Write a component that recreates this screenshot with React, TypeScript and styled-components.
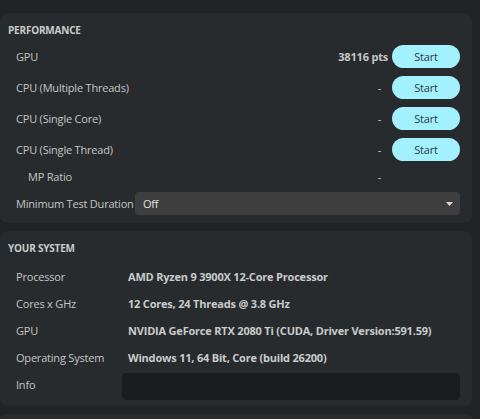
import React from 'react';
import styled, { createGlobalStyle } from 'styled-components';

const GlobalStyle = createGlobalStyle`
  html, body {
    margin: 0;
    padding: 0;
    background: #212325;
  }
  body {
    font-family: 'Open Sans', 'Noto Sans', sans-serif;
    font-size: 11px;
    letter-spacing: -0.2px;
    color: #c4c6c7;
  }
`;

const Page = styled.div`
  display: flex;
  flex-direction: column;
  gap: 8px;
  padding: 13px 8px 0 0;
  height: 419px;
  box-sizing: border-box;
  overflow: hidden;
`;

const Panel = styled.section`
  background: #282b2d;
  border-radius: 8px;
  padding: 10px 12px 8px 8px;
  display: flex;
  flex-direction: column;
`;

const Header = styled.h2`
  margin: 0 0 8px;
  height: 14px;
  line-height: 14px;
  font-size: 10px;
  font-weight: 700;
  color: #c9cbcc;
  text-transform: uppercase;
`;

const PerfList = styled.div`
  display: flex;
  flex-direction: column;
  gap: 8px;
`;

const PerfRow = styled.div<{ $indent?: boolean; $short?: boolean }>`
  display: flex;
  align-items: center;
  height: ${({ $short }) => ($short ? '15px' : '23px')};
  padding-left: ${({ $indent }) => ($indent ? '20px' : '8px')};
`;

const Label = styled.span`
  flex: 1;
  white-space: nowrap;
`;

const Score = styled.span<{ $bold?: boolean; $gap: number }>`
  font-weight: ${({ $bold }) => ($bold ? 700 : 400)};
  margin-right: ${({ $gap }) => $gap}px;
`;

const StartButton = styled.button`
  width: 68px;
  height: 23px;
  border: none;
  border-radius: 12px;
  background: #a3f1ff;
  color: #2b3b3e;
  font-family: inherit;
  font-size: 11px;
  letter-spacing: inherit;
  padding: 0;
  cursor: pointer;
`;

const Spacer = styled.span`
  width: 68px;
`;

const DurationLabel = styled.span`
  width: 119px;
  flex-shrink: 0;
  white-space: nowrap;
`;

const Select = styled.div`
  flex: 1;
  height: 23px;
  border-radius: 4px;
  background: #3e3e3e;
  display: flex;
  align-items: center;
  justify-content: space-between;
  padding: 0 7px 0 8px;
  color: #e2e2e2;
  box-sizing: border-box;
`;

const Caret = styled.svg`
  width: 7px;
  height: 4px;
`;

const SystemList = styled.div`
  display: grid;
  grid-template-columns: 106px minmax(0, 1fr);
  grid-auto-rows: 27px;
  align-items: center;
  padding-left: 8px;
`;

const SysLabel = styled.span`
  white-space: nowrap;
`;

const SysValue = styled.span`
  padding-left: 6px;
  font-weight: 700;
  white-space: nowrap;
  color: #c9cbcc;
`;

const InfoBox = styled.div`
  height: 27px;
  margin-top: 3px;
  border-radius: 4px;
  background: #1b1c1d;
`;

const perfRows = [
  { label: 'GPU', value: '38116 pts' },
  { label: 'CPU (Multiple Threads)', value: '-' },
  { label: 'CPU (Single Core)', value: '-' },
  { label: 'CPU (Single Thread)', value: '-' },
];

const systemRows = [
  ['Processor', 'AMD Ryzen 9 3900X 12-Core Processor'],
  ['Cores x GHz', '12 Cores, 24 Threads @ 3.8 GHz'],
  ['GPU', 'NVIDIA GeForce RTX 2080 Ti (CUDA, Driver Version:591.59)'],
  ['Operating System', 'Windows 11, 64 Bit, Core (build 26200)'],
];

export default function App() {
  return (
    <>
      <GlobalStyle />
      <Page>
        <Panel>
          <Header>Performance</Header>
          <PerfList>
            {perfRows.map((row) => (
              <PerfRow key={row.label}>
                <Label>{row.label}</Label>
                <Score $bold={row.value !== '-'} $gap={row.value === '-' ? 11 : 4}>
                  {row.value}
                </Score>
                <StartButton>Start</StartButton>
              </PerfRow>
            ))}
            <PerfRow $indent $short>
              <Label>MP Ratio</Label>
              <Score $gap={11}>-</Score>
              <Spacer />
            </PerfRow>
            <PerfRow>
              <DurationLabel>Minimum Test Duration</DurationLabel>
              <Select>
                <span>Off</span>
                <Caret viewBox="0 0 7 4">
                  <path d="M0 0h7L3.5 4z" fill="#d8d8d8" />
                </Caret>
              </Select>
            </PerfRow>
          </PerfList>
        </Panel>
        <Panel>
          <Header>Your System</Header>
          <SystemList>
            {systemRows.map(([label, value]) => (
              <React.Fragment key={label}>
                <SysLabel>{label}</SysLabel>
                <SysValue>{value}</SysValue>
              </React.Fragment>
            ))}
            <SysLabel>Info</SysLabel>
            <InfoBox />
          </SystemList>
        </Panel>
        <Panel />
      </Page>
    </>
  );
}
